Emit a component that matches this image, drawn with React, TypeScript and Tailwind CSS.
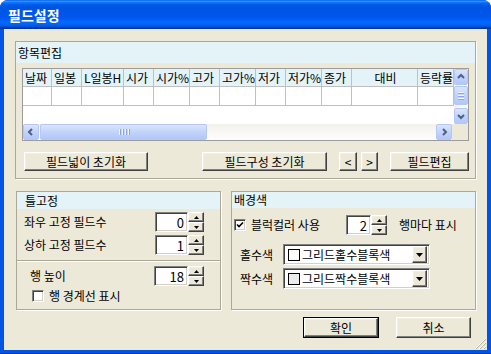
import React from 'react';

const raised =
  'bg-[#ece9d8] border border-t-white border-l-white border-r-[#404040] border-b-[#404040] shadow-[inset_-1px_-1px_0_#808080,inset_1px_1px_0_#f1efe2]';
const sunken =
  'bg-white border border-t-[#808080] border-l-[#808080] border-r-white border-b-white shadow-[inset_1px_1px_0_#404040,inset_-1px_-1px_0_#d4d0c8]';
const xpBtn =
  'rounded-[2px] border border-[#b4c8f6] bg-[linear-gradient(to_bottom,#dbe5fd,#c2d3fb_50%,#b3c7f6)] flex items-center justify-center';

const columns = [
  { label: '날짜', w: 29 },
  { label: '일봉', w: 30 },
  { label: 'L일봉H', w: 42 },
  { label: '시가', w: 30 },
  { label: '시가%', w: 36 },
  { label: '고가', w: 30 },
  { label: '고가%', w: 36 },
  { label: '저가', w: 30 },
  { label: '저가%', w: 36 },
  { label: '종가', w: 30 },
  { label: '대비', w: 66, center: true },
  { label: '등락률', w: 36 },
];

const Chevron: React.FC<{ dir: 'up' | 'down' | 'left' | 'right' }> = ({ dir }) => {
  const d = {
    up: 'M2 6 L5 3 L8 6',
    down: 'M2 4 L5 7 L8 4',
    left: 'M6 2 L3 5 L6 8',
    right: 'M4 2 L7 5 L4 8',
  }[dir];
  return (
    <svg width="10" height="10" viewBox="0 0 10 10">
      <path d={d} fill="none" stroke="#4d6185" strokeWidth="2" />
    </svg>
  );
};

const Spin: React.FC<{ value: string; w: number }> = ({ value, w }) => (
  <div className="flex h-[20px]">
    <div className={`${sunken} h-full flex items-center justify-end pr-[3px] text-[13px]`} style={{ width: w }}>
      {value}
    </div>
    <div className="flex flex-col w-[16px] h-full">
      <div className={`${raised} flex-1 flex items-center justify-center`}>
        <svg width="5" height="3" viewBox="0 0 5 3"><path d="M0 3 L2.5 0 L5 3 Z" fill="#000" /></svg>
      </div>
      <div className={`${raised} flex-1 flex items-center justify-center`}>
        <svg width="5" height="3" viewBox="0 0 5 3"><path d="M0 0 L2.5 3 L5 0 Z" fill="#000" /></svg>
      </div>
    </div>
  </div>
);

const CheckBox: React.FC<{ checked?: boolean }> = ({ checked }) => (
  <div className={`${sunken} w-[12px] h-[12px] shrink-0 flex items-center justify-center`}>
    {checked && (
      <svg width="8" height="8" viewBox="0 0 8 8">
        <path d="M1 3.5 L3 5.5 L7 1.5" fill="none" stroke="#000" strokeWidth="1.6" />
      </svg>
    )}
  </div>
);

const Combo: React.FC<{ text: string; swatch: string }> = ({ text, swatch }) => (
  <div className={`${sunken} w-[147px] h-[21px] flex items-center pl-[4px]`}>
    <div className="w-[12px] h-[12px] border border-black" style={{ background: swatch }} />
    <span className="ml-[2px] flex-1 whitespace-nowrap">{text}</span>
    <div className={`${raised} w-[15px] h-[17px] mr-[2px] flex items-center justify-center`}>
      <svg width="7" height="4" viewBox="0 0 7 4"><path d="M0 0 L3.5 4 L7 0 Z" fill="#000" /></svg>
    </div>
  </div>
);

const Button: React.FC<{ children: React.ReactNode; className?: string }> = ({ children, className }) => (
  <div className={`${raised} h-[19px] flex items-center justify-center whitespace-nowrap ${className ?? ''}`}>{children}</div>
);

export default function App() {
  return (
    <div className="w-[491px] h-[354px] bg-[#0055e5] rounded-t-[8px] flex flex-col overflow-hidden font-['Noto_Sans_CJK_KR',sans-serif] text-[12px] leading-none text-black border-b-[1px] border-[#0030a8]">
      <div className="h-[29px] shrink-0 flex items-center pl-[8px] text-white font-bold text-[14px] bg-[linear-gradient(to_bottom,#0058ee_0%,#3593ff_4%,#288eff_6%,#127dff_8%,#036ffc_10%,#0262ee_14%,#0057e5_20%,#0054e3_24%,#0055eb_56%,#005bf5_66%,#026afe_76%,#0062ef_86%,#0052d6_92%,#0040ab_94%,#003092_100%)]">
        필드설정
      </div>
      <div className="relative flex-1 mx-[4px] mb-[3px] bg-[#ece9d8] flex flex-col px-[11px] pt-[12px]">
        {/* 항목편집 */}
        <div className="h-[138px] border border-[#aca899] shadow-[1px_1px_0_#fff] flex flex-col">
          <div className="h-[21px] bg-[#e3f3f8] flex items-center pl-[2px]">항목편집</div>
          <div className="mt-[5px] mx-[6px] h-[73px] border border-[#9c9c9c] bg-white flex flex-col">
            <div className="h-[55px] flex">
              <div className="flex-1 flex flex-col">
                <div className="flex h-[18px] bg-[#e3f3f8]">
                  {columns.map((c) => (
                    <div
                      key={c.label}
                      className={`h-full border-r border-b border-[#c0c0c0] overflow-hidden whitespace-nowrap flex items-center pl-[2px] ${c.center ? 'justify-center' : ''}`}
                      style={{ width: c.w }}
                    >
                      {c.label}
                    </div>
                  ))}
                </div>
                <div className="flex h-[19px]">
                  {columns.map((c) => (
                    <div key={c.label} className="h-full border-r border-b border-[#c0c0c0]" style={{ width: c.w }} />
                  ))}
                </div>
              </div>
              <div className="w-[16px] flex flex-col bg-[linear-gradient(to_right,#f3f1ec,#fefefb)]">
                <div className={`${xpBtn} h-[16px]`}><Chevron dir="up" /></div>
                <div className={`${xpBtn} h-[19px] mt-[1px] flex-col gap-[2px]`}>
                  <div className="w-[6px] h-[1px] bg-[#eef3fe] shadow-[0_1px_0_#8ca6e0]" />
                  <div className="w-[6px] h-[1px] bg-[#eef3fe] shadow-[0_1px_0_#8ca6e0]" />
                  <div className="w-[6px] h-[1px] bg-[#eef3fe] shadow-[0_1px_0_#8ca6e0]" />
                </div>
                <div className="flex-1" />
                <div className={`${xpBtn} h-[16px]`}><Chevron dir="down" /></div>
              </div>
            </div>
            <div className="h-[16px] flex">
              <div className="flex-1 flex bg-[linear-gradient(to_bottom,#f3f1ec,#fefefb)]">
                <div className={`${xpBtn} w-[16px] h-full`}><Chevron dir="left" /></div>
                <div className={`${xpBtn} w-[167px] h-full ml-[1px] gap-[2px]`}>
                  {[0, 1, 2, 3].map((i) => (
                    <div key={i} className="w-[1px] h-[6px] bg-[#eef3fe] shadow-[1px_0_0_#8ca6e0]" />
                  ))}
                </div>
                <div className="flex-1" />
                <div className={`${xpBtn} w-[16px] h-full`}><Chevron dir="right" /></div>
              </div>
              <div className="w-[16px] h-full bg-[#ece9d8]" />
            </div>
          </div>
          <div className="mt-[11px] flex">
            <Button className="ml-[8px] w-[124px]">필드넓이 초기화</Button>
            <Button className="ml-[54px] w-[125px]">필드구성 초기화</Button>
            <Button className="ml-[12px] w-[18px]">&lt;</Button>
            <Button className="ml-[4px] w-[17px]">&gt;</Button>
            <Button className="ml-[12px] w-[79px]">필드편집</Button>
          </div>
        </div>

        <div className="mt-[12px] flex whitespace-nowrap">
          {/* 틀고정 */}
          <div className="ml-[1px] w-[205px] h-[119px] border border-[#aca899] shadow-[1px_1px_0_#fff] flex flex-col">
            <div className="h-[17px] bg-[#e3f3f8] flex items-center pl-[8px]">틀고정</div>
            <div className="mt-[3px] h-[20px] flex items-center justify-between pl-[7px] pr-[16px]">
              <span>좌우 고정 필드수</span>
              <Spin value="0" w={33} />
            </div>
            <div className="mt-[3px] h-[20px] flex items-center justify-between pl-[7px] pr-[16px]">
              <span>상하 고정 필드수</span>
              <Spin value="1" w={33} />
            </div>
            <div className="mt-[5px] h-[1px] bg-[#aca899] shadow-[0_1px_0_#fff]" />
            <div className="mt-[5px] h-[20px] flex items-center justify-between pl-[13px] pr-[16px]">
              <span>행 높이</span>
              <Spin value="18" w={34} />
            </div>
            <div className="mt-[4px] flex items-center pl-[15px] gap-[5px]">
              <CheckBox />
              <span>행 경계선 표시</span>
            </div>
          </div>

          {/* 배경색 */}
          <div className="ml-[10px] w-[245px] h-[119px] border border-[#aca899] shadow-[1px_1px_0_#fff] flex flex-col">
            <div className="h-[16px] bg-[#e3f3f8] flex items-center pl-[2px]">배경색</div>
            <div className="mt-[7px] h-[20px] flex items-center pl-[2px]">
              <CheckBox checked />
              <span className="ml-[5px] w-[95px]">블럭컬러 사용</span>
              <Spin value="2" w={25} />
              <span className="ml-[12px]">행마다 표시</span>
            </div>
            <div className="mt-[9px] flex items-center pl-[8px]">
              <span className="w-[43px]">홀수색</span>
              <Combo text="그리드홀수블록색" swatch="#ffffff" />
            </div>
            <div className="mt-[3px] flex items-center pl-[8px]">
              <span className="w-[43px]">짝수색</span>
              <Combo text="그리드짝수블록색" swatch="#ececec" />
            </div>
          </div>
        </div>

        <div className="mt-[7px] flex justify-end pr-[5px] gap-[17px]">
          <div className="border border-black">
            <Button className="w-[74px] h-[19px]">확인</Button>
          </div>
          <Button className="w-[75px] h-[21px]">취소</Button>
        </div>

        <svg className="absolute right-[1px] bottom-[1px]" width="12" height="12" viewBox="0 0 12 12">
          {[3, 7, 11].map((o) => (
            <g key={o}>
              <line x1={12} y1={12 - o} x2={12 - o} y2={12} stroke="#fff" strokeWidth="1" />
              <line x1={12} y1={13 - o} x2={13 - o} y2={12} stroke="#b9b6a6" strokeWidth="1" />
            </g>
          ))}
        </svg>
      </div>
    </div>
  );
}
